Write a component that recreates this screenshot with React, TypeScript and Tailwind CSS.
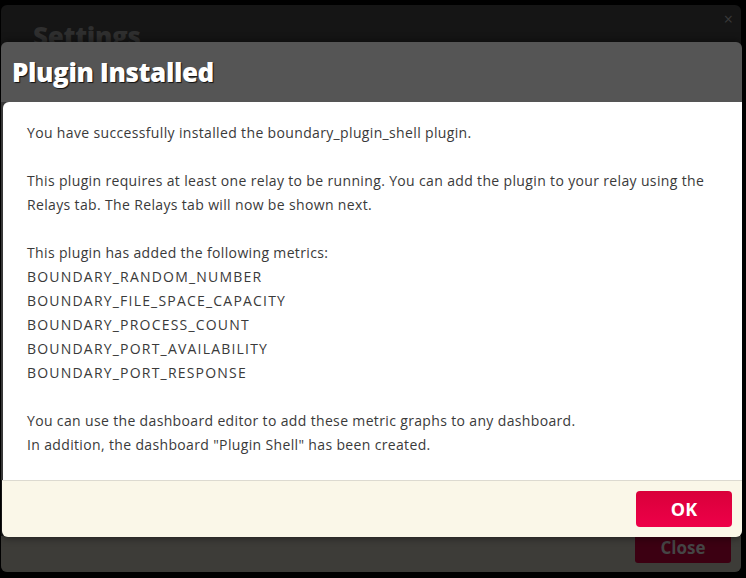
const metrics = [
  "BOUNDARY_RANDOM_NUMBER",
  "BOUNDARY_FILE_SPACE_CAPACITY",
  "BOUNDARY_PROCESS_COUNT",
  "BOUNDARY_PORT_AVAILABILITY",
  "BOUNDARY_PORT_RESPONSE",
];

export default function App() {
  return (
    <div
      className="relative w-[746px] h-[578px] overflow-hidden bg-black pt-[5px] pl-[1px]"
      style={{ fontFamily: "'Open Sans', 'Liberation Sans', sans-serif" }}
    >
      {/* Settings dialog behind */}
      <div className="flex flex-col w-[740px] h-[567px] rounded-md bg-[#151515] overflow-hidden">
        <div className="flex items-start justify-between pl-[32px] pr-[8px] pt-[6px] h-[60px]">
          <h2 className="mt-[12px] text-[26px] font-extrabold text-[#2f2f2f] leading-none tracking-[-0.3px]">Settings</h2>
          <span className="text-[16px] leading-none text-[#3a3a3a]">×</span>
        </div>
        <div className="flex-1" />
        <div className="flex justify-end items-start h-[36px] bg-[#3d3c38] pr-[10px]">
          <div className="w-[96px] h-[27px] rounded-b-[3px] bg-[#3c0012] flex items-start justify-center text-[17px] font-bold text-[#454545] leading-[24px]">
            Close
          </div>
        </div>
      </div>

      {/* Plugin installed dialog */}
      <div className="absolute left-[1px] top-[42px] w-[741px] flex flex-col shadow-[0_0_8px_rgba(0,0,0,0.6)] rounded-md">
        <div className="h-[60px] bg-[#555555] rounded-t-md px-[11px] flex items-center">
          <h1 className="text-[26px] font-extrabold text-white tracking-[-0.4px] [text-shadow:1px_1px_1px_rgba(0,0,0,0.8)]">
            Plugin Installed
          </h1>
        </div>
        <div className="bg-[#383838]">
          <div className="ml-[2px] bg-white rounded-tl-md px-[24px] pt-[19px] pb-[23px] text-[14px] leading-[24px] tracking-[0.35px] text-[#3a3a3a]">
            <p>You have successfully installed the boundary_plugin_shell plugin.</p>
            <p className="mt-[24px]">
              This plugin requires at least one relay to be running. You can add the plugin to your relay using the
              Relays tab. The Relays tab will now be shown next.
            </p>
            <p className="mt-[24px]">This plugin has added the following metrics:</p>
            {metrics.map((m) => (
              <p key={m} className="tracking-[1.2px]">
                {m}
              </p>
            ))}
            <p className="mt-[24px]">You can use the dashboard editor to add these metric graphs to any dashboard.</p>
            <p>In addition, the dashboard "Plugin Shell" has been created.</p>
          </div>
        </div>
        <div className="h-[57px] ml-[1px] bg-[#faf7e8] border-t border-[#dcdad0] rounded-b-md flex items-center justify-end pr-[10px]">
          <button className="w-[96px] h-[36px] rounded-[4px] bg-gradient-to-b from-[#d9003a] to-[#ee0049] text-white text-[18px] font-bold">
            OK
          </button>
        </div>
      </div>
    </div>
  );
}
